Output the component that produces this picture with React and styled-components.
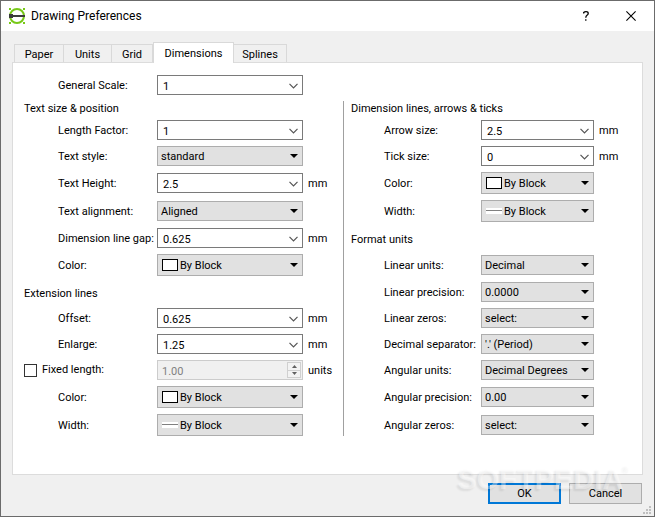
import React, { useId, useState } from "react";
import styled, { createGlobalStyle } from "styled-components";

const GlobalStyle = createGlobalStyle`
  * { box-sizing: border-box; }
  body {
    margin: 0;
    color: #000;
    font-family: Roboto, Tahoma, sans-serif;
    font-size: 11px;
    line-height: 14px;
  }
  button, input, select { font: inherit; color: inherit; margin: 0; border-radius: 0; }
`;

const Dialog = styled.main`
  position: relative;
  display: flex;
  flex-direction: column;
  min-height: 100vh;
  background: #f0f0f0;
  border: 1px solid #6b6b6b;
`;

const TitleBar = styled.header`
  display: flex;
  align-items: center;
  height: 30px;
  padding: 0 11px 0 8px;
  background: #fff;
`;

const Title = styled.h1`
  flex: 1;
  margin: 0 0 0 5px;
  font: 400 12px/16px Roboto, "Segoe UI", sans-serif;
`;

const CaptionButton = styled.button`
  display: grid;
  place-items: center;
  width: 24px;
  height: 24px;
  margin-left: 21px;
  padding: 0;
  border: 0;
  background: none;
`;

const TabBar = styled.div`
  display: flex;
  align-items: flex-end;
  height: 20px;
  margin: 11px 11px 0 13px;
`;

const Tab = styled.button`
  position: relative;
  z-index: ${(p) => (p.$active ? 1 : 0)};
  width: ${(p) => p.$width}px;
  height: ${(p) => (p.$active ? 21 : 18)}px;
  margin-bottom: ${(p) => (p.$active ? -1 : 0)}px;
  padding: ${(p) => (p.$active ? 1 : 2)}px 0 0;
  border: 1px solid #d9d9d9;
  border-bottom: 0;
  border-left-width: ${(p) => (p.$joined ? 0 : 1)}px;
  background: ${(p) => (p.$active ? "#fff" : "#f0f0f0")};
  white-space: nowrap;
`;

const Panel = styled.section`
  flex: 1;
  margin: 0 11px;
  padding: 12px 12px 38px 11px;
  border: 1px solid #dcdcdc;
  background: #fff;
`;

const Columns = styled.div`
  display: grid;
  grid-template-columns: 319fr 287fr;
`;

const Column = styled.div`
  padding-left: ${(p) => (p.$divided ? 7 : 0)}px;
  border-left: ${(p) => (p.$divided ? "1px solid #a0a0a0" : "0")};
  margin-top: ${(p) => (p.$divided ? 6 : 0)}px;
`;

const Group = styled.fieldset`
  min-width: 0;
  margin: 0;
  padding: 0;
  border: 0;
`;

const GroupTitle = styled.legend`
  padding: ${(p) => p.$top}px 0 ${(p) => p.$bottom}px;
`;

const Row = styled.div`
  display: flex;
  align-items: center;
  margin-top: ${(p) => p.$gap || 0}px;
  padding-left: ${(p) => (p.$flush ? 0 : p.$right ? 33 : 34)}px;
`;

const Label = styled.label`
  flex: none;
  width: ${(p) => (p.$right ? 97 : 99)}px;
  padding-top: 2px;
  white-space: nowrap;
`;

const CheckLabel = styled.label`
  display: flex;
  flex: none;
  align-items: center;
  gap: 5px;
  width: 133px;
`;

const CheckBox = styled.input`
  appearance: none;
  width: 13px;
  height: 13px;
  border: 1px solid #333;
  background: #fff;
  &:checked { background: #0078d7; }
`;

const Unit = styled.span`
  flex: none;
  width: ${(p) => (p.$right ? 31 : 35)}px;
  margin-left: 5px;
  padding-top: 2px;
`;

const Field = styled.div`
  display: grid;
  flex: 1;
  min-width: 0;
  height: ${(p) => (p.$tall ? 22 : 20)}px;
  grid-template-columns: minmax(0, 1fr) 18px;
`;

const TextInput = styled.input`
  grid-area: 1 / 1 / 2 / 3;
  width: 100%;
  height: 100%;
  padding: 2px 20px 0 5px;
  border: 1px solid #7a7a7a;
  background: #fff;
  outline: 0;
  appearance: textfield;
  &:disabled {
    padding-left: 4px;
    border-color: #ccc;
    background: #f0f0f0;
    color: #808080;
  }
  &::-webkit-inner-spin-button { appearance: none; }
`;

const DropButton = styled.button`
  grid-area: 1 / 2;
  z-index: 1;
  display: grid;
  place-items: center start;
  padding: 1px 0 0 4px;
  border: 0;
  background: none;
`;

const SelectBox = styled.select`
  grid-area: 1 / 1 / 2 / 3;
  width: 100%;
  height: 100%;
  padding: 2px 18px 0 ${(p) => (p.$swatch ? 22 : 3)}px;
  border: 1px solid #adadad;
  background: #e1e1e1;
  appearance: none;
  outline: 0;
`;

const Arrow = styled.svg`
  grid-area: 1 / 2;
  z-index: 1;
  align-self: center;
  margin-left: 5px;
  pointer-events: none;
`;

const Swatch = styled.svg`
  grid-area: 1 / 1;
  z-index: 1;
  align-self: center;
  margin-left: 5px;
  pointer-events: none;
`;

const Spinner = styled.div`
  grid-area: 1 / 2;
  z-index: 1;
  display: flex;
  flex-direction: column;
  width: 14px;
  margin: 2px 0 2px 2px;
`;

const SpinButton = styled.button`
  display: grid;
  place-items: center;
  flex: 1;
  min-height: 0;
  padding: 0;
  border: 1px solid #d0d0d0;
  border-top-width: ${(p) => (p.$lower ? 0 : 1)}px;
  background: #f3f3f3;
`;

const Footer = styled.footer`
  display: flex;
  justify-content: flex-end;
  gap: 8px;
  padding: 8px 12px 12px;
`;

const PushButton = styled.button`
  width: 73px;
  height: 21px;
  padding: 1px 0 0;
  border: ${(p) => (p.$primary ? "2px solid #0078d7" : "1px solid #adadad")};
  background: #e1e1e1;
`;

const Grip = styled.svg`
  position: absolute;
  right: 3px;
  bottom: 2px;
`;

const Watermark = styled.div`
  position: absolute;
  right: 24px;
  bottom: 22px;
  display: flex;
  color: rgba(255, 255, 255, 0.4);
  font: 700 29px/30px "Liberation Sans", Arial, sans-serif;
  text-shadow: -2px 2px 2px rgba(0, 0, 0, 0.08);
  pointer-events: none;
`;

const Registered = styled.span`
  font-size: 9px;
  line-height: 10px;
`;

function AppIcon() {
  return (
    <svg width="17" height="17" viewBox="0 0 17 17" aria-hidden="true">
      <circle cx="8" cy="8" r="7" fill="none" stroke="#77c818" strokeWidth="2" />
      <path d="M0 0h2v2H0zM14 0h2v2h-2zM0 14h2v2H0zM14 14h2v2h-2z" fill="#77c818" />
      <path d="M0 6h4v1h12v2H4v1H0z" fill="#3b3b3b" />
    </svg>
  );
}

function Combo({ id, value }) {
  const [text, setText] = useState(value);
  return (
    <Field>
      <TextInput id={id} type="text" value={text} onChange={(e) => setText(e.target.value)} />
      <DropButton type="button" aria-label="Show values">
        <svg width="9" height="6" viewBox="0 0 9 6" aria-hidden="true">
          <path d="M0.5 0.8l4 4 4-4" fill="none" stroke="#555" strokeWidth="1.2" />
        </svg>
      </DropButton>
    </Field>
  );
}

function Choice({ id, value, swatch }) {
  return (
    <Field $tall={Boolean(swatch)}>
      <SelectBox id={id} $swatch={swatch} defaultValue={value}>
        <option>{value}</option>
      </SelectBox>
      {swatch && (
        <Swatch width="16" height="12" viewBox="0 0 16 12" aria-hidden="true">
          {swatch === "color" ? (
            <rect x="0.5" y="0.5" width="15" height="11" fill="#fff" stroke="#000" />
          ) : (
            <>
              <rect y="3" width="16" height="6" fill="#fff" />
              <rect y="5" width="16" height="1" fill="#808080" />
            </>
          )}
        </Swatch>
      )}
      <Arrow width="8" height="4" viewBox="0 0 8 4" aria-hidden="true">
        <path d="M0 0h8L4 4z" fill="#000" />
      </Arrow>
    </Field>
  );
}

function Setting({ label, value, kind, unit, gap, right }) {
  const id = useId();
  return (
    <Row $gap={gap} $right={right}>
      <Label htmlFor={id} $right={right}>{label}</Label>
      {kind === "combo" ? (
        <Combo id={id} value={value} />
      ) : (
        <Choice id={id} value={value} swatch={kind} />
      )}
      <Unit $right={right}>{unit}</Unit>
    </Row>
  );
}

function FixedLength() {
  const [fixed, setFixed] = useState(false);
  return (
    <Row $gap={6} $flush>
      <CheckLabel>
        <CheckBox type="checkbox" checked={fixed} onChange={(e) => setFixed(e.target.checked)} />
        Fixed length:
      </CheckLabel>
      <Field>
        <TextInput type="number" step="0.01" defaultValue="1.00" aria-label="Fixed length" disabled={!fixed} />
        <Spinner>
          <SpinButton type="button" aria-label="Increase" disabled={!fixed}>
            <svg width="5" height="3" viewBox="0 0 5 3"><path d="M0 3h5L2.5 0z" fill="#606060" /></svg>
          </SpinButton>
          <SpinButton type="button" aria-label="Decrease" disabled={!fixed} $lower>
            <svg width="5" height="3" viewBox="0 0 5 3"><path d="M0 0h5L2.5 3z" fill="#606060" /></svg>
          </SpinButton>
        </Spinner>
      </Field>
      <Unit>units</Unit>
    </Row>
  );
}

const TABS = [
  ["Paper", 50],
  ["Units", 48],
  ["Grid", 41],
  ["Dimensions", 81],
  ["Splines", 53],
];

export default function App() {
  return (
    <>
      <GlobalStyle />
      <Dialog>
        <TitleBar>
          <AppIcon />
          <Title>Drawing Preferences</Title>
          <CaptionButton type="button" aria-label="Help">
            <svg width="6" height="10" viewBox="0 0 6 10" aria-hidden="true">
              <path d="M0.7 2.5V1.5Q1.5 0.7 3 0.7Q5.2 0.7 5.2 2.4Q5.2 3.5 4 4.3Q2.8 5.1 2.8 6.8M2.8 8.2V9.8" fill="none" stroke="#000" strokeWidth="1.3" />
            </svg>
          </CaptionButton>
          <CaptionButton type="button" aria-label="Close">
            <svg width="10" height="10" viewBox="0 0 10 10" aria-hidden="true">
              <path d="M0.4 0.4l9.2 9.2M9.6 0.4l-9.2 9.2" stroke="#000" strokeWidth="1.1" />
            </svg>
          </CaptionButton>
        </TitleBar>

        <TabBar role="tablist">
          {TABS.map(([name, width], i) => (
            <Tab
              key={name}
              type="button"
              role="tab"
              aria-selected={name === "Dimensions"}
              $active={name === "Dimensions"}
              $joined={i > 0 && name !== "Dimensions"}
              $width={width}
            >
              {name}
            </Tab>
          ))}
        </TabBar>

        <Panel role="tabpanel" aria-label="Dimensions">
          <Columns>
            <Column>
              <Setting label="General Scale:" value="1" kind="combo" />
            </Column>
          </Columns>
          <Columns>
            <Column>
              <Group>
                <GroupTitle $top={7} $bottom={4}>Text size &amp; position</GroupTitle>
                <Setting label="Length Factor:" value="1" kind="combo" />
                <Setting label="Text style:" value="standard" gap={6} />
                <Setting label="Text Height:" value="2.5" kind="combo" unit="mm" gap={7} />
                <Setting label="Text alignment:" value="Aligned" gap={8} />
                <Setting label="Dimension line gap:" value="0.625" kind="combo" unit="mm" gap={7} />
                <Setting label="Color:" value="By Block" kind="color" gap={6} />
              </Group>
              <Group>
                <GroupTitle $top={11} $bottom={7}>Extension lines</GroupTitle>
                <Setting label="Offset:" value="0.625" kind="combo" unit="mm" />
                <Setting label="Enlarge:" value="1.25" kind="combo" unit="mm" gap={6} />
                <FixedLength />
                <Setting label="Color:" value="By Block" kind="color" gap={6} />
                <Setting label="Width:" value="By Block" kind="width" gap={6} />
              </Group>
            </Column>
            <Column $divided>
              <Group>
                <GroupTitle $top={1} $bottom={4}>Dimension lines, arrows &amp; ticks</GroupTitle>
                <Setting right label="Arrow size:" value="2.5" kind="combo" unit="mm" />
                <Setting right label="Tick size:" value="0" kind="combo" unit="mm" gap={6} />
                <Setting right label="Color:" value="By Block" kind="color" gap={6} />
                <Setting right label="Width:" value="By Block" kind="width" gap={6} />
              </Group>
              <Group>
                <GroupTitle $top={11} $bottom={8}>Format units</GroupTitle>
                <Setting right label="Linear units:" value="Decimal" />
                <Setting right label="Linear precision:" value="0.0000" gap={7} />
                <Setting right label="Linear zeros:" value="select:" gap={6} />
                <Setting right label="Decimal separator:" value="'.' (Period)" gap={6} />
                <Setting right label="Angular units:" value="Decimal Degrees" gap={6} />
                <Setting right label="Angular precision:" value="0.00" gap={7} />
                <Setting right label="Angular zeros:" value="select:" gap={8} />
              </Group>
            </Column>
          </Columns>
        </Panel>

        <Footer>
          <PushButton type="button" $primary>OK</PushButton>
          <PushButton type="button">Cancel</PushButton>
        </Footer>
        <Watermark aria-hidden="true">
          SOFTPEDIA<Registered>®</Registered>
        </Watermark>
        <Grip width="8" height="8" viewBox="0 0 8 8" aria-hidden="true">
          <path d="M6 0h2v2H6zM3 3h2v2H3zM6 3h2v2H6zM0 6h2v2H0zM3 6h2v2H3zM6 6h2v2H6z" fill="#bfbfbf" />
        </Grip>
      </Dialog>
    </>
  );
}
